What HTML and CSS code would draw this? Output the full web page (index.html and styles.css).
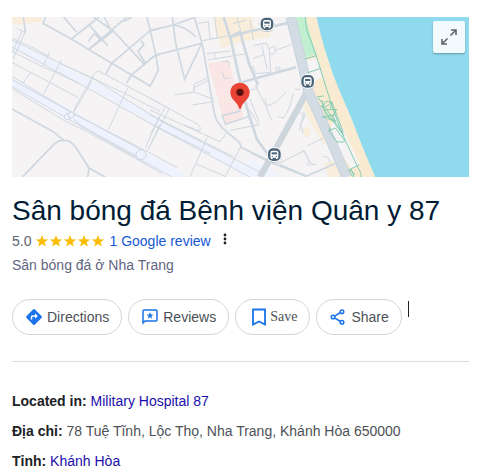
FILE: index.html
```html
<!DOCTYPE html>
<html lang="vi">
  <head>
    <meta charset="UTF-8" />
    <meta name="viewport" content="width=device-width, initial-scale=1.0" />
    <title>Sân bóng đá Bệnh viện Quân y 87</title>
    <link rel="stylesheet" href="styles.css">
  </head>
  <body>
    <div class="panel">
      <div class="map">
        <svg class="map-image" viewBox="36 21 1371 480" preserveAspectRatio="xMidYMid slice" aria-hidden="true">
          <defs>
            <g id="bus">
              <rect x="-22" y="-20" width="44" height="44" rx="18" fill="#b9c1c8" />
              <rect x="-22" y="-22" width="44" height="44" rx="18" fill="#fff" />
              <rect x="-19" y="-19" width="38" height="38" rx="15" fill="#4b6478" />
              <path d="M-12 -6q0-6 6-6h12q6 0 6 6v15h-2v4h-5v-4h-10v4h-5v-4h-2z" fill="#fff" />
              <path d="M-8 -7h16v6h-16z" fill="#4b6478" />
              <circle cx="-6" cy="5" r="2" fill="#4b6478" />
              <circle cx="6" cy="5" r="2" fill="#4b6478" />
            </g>
          </defs>
          <rect x="36" y="21" width="1371" height="480" fill="#f5f3f3" />

          <!-- built up areas -->
          <path d="M36 21h90v14l-84 10-6-8z" fill="#f8eedb" />
          <g transform="translate(450 0)">
            <path d="M190 21h115l10 40 50-8-5 28-90 15-55 18-20-55z" fill="#f8eedb" />
            <path d="M174 160l62-9 40 145 3 30-55 15z" fill="#fae6e4" />
            <path d="M292 443l96 48-6 10h-110z" fill="#f0f4fe" />
          </g>

          <!-- railway and main avenue -->
          <path d="M36 104L300 237 486 345 650 435 850 540" class="avenue" />
          <path d="M36 216L215 316 423 434 580 525" class="avenue wide" />

          <!-- coast -->
          <g transform="translate(900 0)">
            <path d="M18 21h32l52 180 70 170 55 130h-85L70 340 22 250z" fill="#f8ebd2" />
            <path d="M50 21c12 60 28 110 52 180 25 64 48 110 70 170 18 46 36 90 54 130h281V21z" fill="#90daee" />
            <path d="M-12 21h28l32 112-46 13z" fill="#c3efd1" />
            <path d="M18 152l34-10 14 60-18 10-24-26zM106 310l75 155-28 12-65-110z" fill="#f5f3f3" />
            <path d="M10 355l20-3v25l-15 5zM0 275l20-15 34 70 30 62-14 10-36-60z" fill="#f8eedb" />
            <path d="M75 462l38-15 24 54h-52z" fill="#f8eedb" />
          </g>

          <g class="road thin">
            <path d="M36 84l66 31 45 24M36 124l93 47 33 14 73 35M36 157l50 27 65 34 83 45M50 55l25 12-36 80M66 64L36 130M149 127l-21 43M184 150l-52 101M92 187l-22 32M180 160l100 45 93 45 107 54" />
            <path d="M294 182l185 98M294 182q-16 10-20 27l-45 75-12 30M278 198q-5 25-25 55l-30 50M384 232l-59 127M479 318l-42 94M479 345l-35 75" />
            <path d="M36 199l180 110 225 115 90 49M36 209l390 212M36 230l170 98 200 113 110 60M36 236l160 98 60 28 150 83 80 46M224 328l15 17 170 93" />
            <path d="M36 90l250 120 200 125 160 82 150 78M36 111l250 136 200 113 150 80 120 65" />
          </g>
          <g class="road">
            <path d="M70 21l6 46M137 21l-8 19 85 47 121 73 116 68 24-47-8-48-26-112M191 21l39 46M297 21l-83 66M381 21L266 118M395 21l-22 14M280 21l60 42 96 103M266 43l58 65M284 70l-19 23M285 72l18 19-36 27M303 91l37-28M313 21l18 36M480 55l-30 7-115 98-18 33M480 133l-14 2-72 60-14 24M424 92l8 12-18 20 24 38M36 297l124 68 32 27q-15-4-33 14l-91 94M192 392q15-5 35 20l40 62 50 28M267 474l-4 28" />
          </g>
          <circle cx="202" cy="320" r="9" class="ring" />
          <circle cx="213" cy="315" r="9" class="ring" />
          <circle cx="423" cy="434" r="15" class="ring" />

          <g transform="translate(450 0)">
            <g class="road">
              <path d="M0 62l70-17 67-24M0 147l22-13 133-34M67 21l10 79 27 108 51-108M72 45q36 6 65 35" />
              <path d="M133 21l24 82 34 196q4 40 40 67l38 32 4 14 110 53 90 36M216 317l11 26 72-24M216 317l56-14" />
            </g>
            <g class="road broad">
              <path d="M221 21l22 70 32 145 24 85 22 67 34 48" />
              <path d="M238 82l32-16 28 98 26 60" />
              <path d="M238 82l55-17 130-28M270 218l168-46" />
            </g>
            <g class="road thin">
              <path d="M0 264l145 80q10 8 4 20l-48-20M0 300l210 95 22-29M46 290L0 374M58 295L5 398M172 382l-52 118M0 340l180 90M138 462l90 38M270 414l-45 87M0 314l250 126" />
              <path d="M174 203l-40 18-4 24 61 23M73 254l57-7 3-14 42-22M127 285l64-10M158 92l80-15M170 131l70-8M174 150l110-18M194 127v18M145 40l30-5 5 50h22l-8-64M250 40l40-10M260 21l12 40M300 30l10 60" />
              <path d="M215 155l20-2 4 14M217 187l5 17h20M262 300q15-2 10-10M300 240l22-4-6-35M299 300l27 44-85 17M310 107l38-8 10 18 4 70-46 4-8-25M310 145l30-10M336 107l15 70M358 117q18-18 18 5 0 12-14 10M378 120l46-16M378 172h12v8h-12zM315 225l32 62 17 42M300 267l27 68M345 265l6 22q28-5 56-40" />
              <path d="M452 238h-18M430 250q-10 50-30 74l-14-4M460 263l-25 36 25 15-12 48M372 464l-70-35M380 464l82-42 20 38M470 460l10 8" />
            </g>
            <path d="M477 234L380 412 330 501" class="trunk" />
          </g>

          <!-- seaside boulevard -->
          <g transform="translate(900 0)">
            <path d="M-28 21L4 150 26 246 96 400 140 501" class="boulevard-edge" />
            <path d="M-28 21L4 150 26 246 96 400 140 501" class="boulevard" />
            <g class="road thin">
              <path d="M20 408l50-23M10 305l5 10-10 24M0 340l10 30M0 430l12-8 20 40 15 2M70 440q15-5 20 20" />
            </g>
            <path d="M-60 464l80 34 85-37" class="road" />
            <g class="park">
              <path d="M16 21q2 45 18 75l15 42 45 145 18 50 20 50 42 90q12 20 8 28M49 137l-35 10M62 175l-38 13" />
              <path d="M52 260l20-2M66 270q8 60 38 62M54 262l40 56 38 60M62 285l68 90M66 292l12-18 18 2-5 20M70 300l40-2-12 20 10 18-38-16M64 322l42-8M86 362l20-8 28 38-3 4h-20zM88 352l2 10M76 290l20-12 34 90M146 480l32-16M146 480l12 20M154 478l8 22M150 480l16 14" />
            </g>
          </g>

          <use href="#bus" x="801" y="42" />
          <use href="#bus" x="923" y="214" />
          <use href="#bus" x="823" y="434" />

          <!-- pin -->
          <path d="M720 218c-16 0-29 13-29 29 0 22 20 28 25 45q1 5 4 5t4-5c5-17 25-23 25-45 0-16-13-29-29-29z" fill="#ea4335" />
          <circle cx="720" cy="247" r="11" fill="#5c120c" />
        </svg>
        <button class="expand" aria-label="Expand map">
          <svg width="16" height="16" viewBox="0 0 16 16">
            <path d="M10 1h5v5M15 1L9.500 6.500M6 15H1v-5M1 15l5.500-5.500" fill="none" stroke="#616568" stroke-width="1.600" />
          </svg>
        </button>
      </div>

      <h1>Sân bóng đá Bệnh viện Quân y 87</h1>
      <div class="rating">
        <span>5.0</span>
        <svg class="stars" width="70" height="14" viewBox="0 0 70 14" role="img" aria-label="5 stars">
          <defs>
            <path id="star" d="M7 1l1.600 4.200 4.600.200-3.600 2.800 1.300 4.400L7 10.100l-3.900 2.500 1.300-4.400L.8 5.400l4.600-.2z" fill="#fbbc04" />
          </defs>
          <use href="#star" />
          <use href="#star" x="14" />
          <use href="#star" x="28" />
          <use href="#star" x="42" />
          <use href="#star" x="56" />
        </svg>
        <a class="review-link" href="#">1 Google review</a>
        <button class="more" aria-label="More">
          <svg width="4" height="12" viewBox="0 0 4 12" fill="#202124">
            <circle cx="2" cy="2" r="1.400" />
            <circle cx="2" cy="6" r="1.400" />
            <circle cx="2" cy="10" r="1.400" />
          </svg>
        </button>
      </div>
      <div class="category">Sân bóng đá ở Nha Trang</div>

      <div class="actions">
        <button class="pill">
          <svg width="16" height="16" viewBox="0 0 16 16">
            <path d="M7 .6q1-1 2 0L15.400 7q1 1 0 2L9 15.400q-1 1-2 0L.6 9q-1-1 0-2z" fill="#1a73e8" />
            <path d="M5.500 10.500V8q0-1 1-1H10" fill="none" stroke="#fff" stroke-width="1.500" />
            <path d="M9 4.300L11.800 7 9 9.700z" fill="#fff" />
          </svg>
          Directions
        </button>
        <button class="pill">
          <svg width="16" height="16" viewBox="0 0 16 16">
            <path d="M1 14V2q0-1 1-1h12q1 0 1 1v9q0 1-1 1H3z" fill="none" stroke="#1a73e8" stroke-width="1.500" />
            <path d="M8 3l.9 2.500 2.600.1-2.100 1.600.8 2.500L8 8.200 5.800 9.700l.8-2.500-2.100-1.600 2.600-.1z" fill="#1a73e8" />
          </svg>
          Reviews
        </button>
        <button class="pill save">
          <svg width="14" height="18" viewBox="0 0 14 18">
            <path d="M1 1.500h12v15l-6-3-6 3z" fill="none" stroke="#1a73e8" stroke-width="1.800" />
          </svg>
          Save
        </button>
        <button class="pill">
          <svg width="16" height="16" viewBox="0 0 16 16" fill="none" stroke="#1a73e8" stroke-width="1.500">
            <path d="M4.500 7.200l6-3.700M4.500 8.800l6 3.700" />
            <circle cx="3" cy="8" r="1.800" />
            <circle cx="12" cy="2.800" r="1.800" />
            <circle cx="12" cy="13.200" r="1.800" />
          </svg>
          Share
        </button>
        <span class="caret"></span>
      </div>

      <div class="info">
        <div><b>Located in:</b> <a href="#">Military Hospital 87</a></div>
        <div><b>Địa chỉ:</b> 78 Tuệ Tĩnh, Lộc Thọ, Nha Trang, Khánh Hòa 650000</div>
        <div><b>Tỉnh:</b> <a href="#">Khánh Hòa</a></div>
      </div>
    </div>
  </body>
</html>
```
FILE: styles.css
```css
body {
  margin: 0;
  padding: 17px 13px 0 12px;
  background-color: white;
  color: #4d5156;
  font-family: "Liberation Sans", Arial, sans-serif;
  font-size: 14px;
}
a {
  color: #1a0dab;
  text-decoration: none;
}
button {
  font: inherit;
  cursor: pointer;
}
.map {
  position: relative;
  height: 160px;
}
.map-image {
  display: block;
  width: 100%;
  height: 100%;
}
.road {
  fill: none;
  stroke: #cfd8e1;
  stroke-width: 5;
}
.thin {
  stroke-width: 3;
}
.broad {
  stroke-width: 8;
}
.trunk {
  fill: none;
  stroke: #cdd6dd;
  stroke-width: 19;
}
.boulevard-edge {
  fill: none;
  stroke: #c3ced8;
  stroke-width: 30;
}
.boulevard {
  fill: none;
  stroke: #d3dce4;
  stroke-width: 26;
}
.avenue {
  fill: none;
  stroke: #edf2fe;
  stroke-width: 20;
}
.wide {
  stroke-width: 26;
}
.ring {
  fill: #edf2fe;
  stroke: #cfd8e1;
  stroke-width: 3;
}
.park {
  fill: none;
  stroke: #83cdb3;
  stroke-width: 3;
}
.expand {
  position: absolute;
  top: 4px;
  right: 4px;
  display: flex;
  align-items: center;
  justify-content: center;
  width: 32px;
  height: 32px;
  padding: 0;
  border: 0;
  border-radius: 2px;
  background-color: #f2fafd;
  box-shadow: 0 1px 2px rgba(0, 0, 0, 0.3);
}
h1 {
  margin: 16px 0 0;
  color: #001d35;
  font-size: 28px;
  font-weight: normal;
  line-height: 36px;
}
.rating {
  display: flex;
  align-items: center;
  height: 24px;
  color: #5e6470;
}
.stars {
  margin: 0 4px;
}
.review-link {
  color: #1558d6;
}
.more {
  display: flex;
  margin-left: 12px;
  padding: 0 0 4px;
  border: 0;
  background: none;
}
.category {
  color: #5f6680;
  line-height: 24px;
}
.actions {
  display: flex;
  flex-wrap: wrap;
  gap: 6px;
  margin-top: 22px;
  padding-bottom: 26px;
  border-bottom: 1px solid #dadce0;
}
.pill {
  display: flex;
  align-items: center;
  gap: 5px;
  height: 36px;
  padding: 0 12px 0 13px;
  border: 1px solid #d2d5d9;
  border-radius: 18px;
  background-color: white;
  color: #4d5156;
}
.save {
  gap: 4px;
  padding-left: 16px;
  font-family: "Liberation Serif", "Times New Roman", serif;
}
.caret {
  width: 1px;
  height: 16px;
  margin-top: 2px;
  background-color: #202124;
}
.info {
  padding-top: 24px;
  line-height: 30px;
}
.info b {
  color: #202124;
}
```
